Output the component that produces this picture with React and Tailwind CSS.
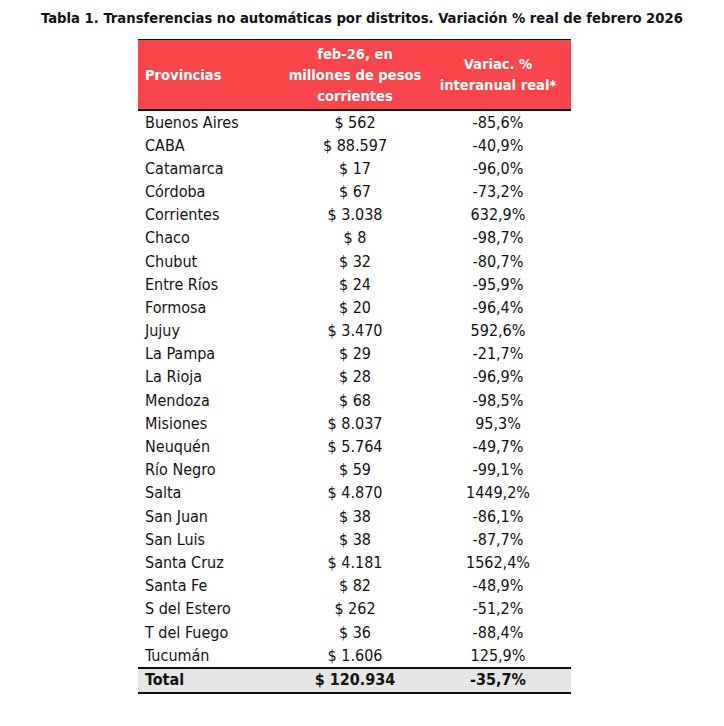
const rows = [
  ['Buenos Aires', '$ 562', '-85,6%'],
  ['CABA', '$ 88.597', '-40,9%'],
  ['Catamarca', '$ 17', '-96,0%'],
  ['Córdoba', '$ 67', '-73,2%'],
  ['Corrientes', '$ 3.038', '632,9%'],
  ['Chaco', '$ 8', '-98,7%'],
  ['Chubut', '$ 32', '-80,7%'],
  ['Entre Ríos', '$ 24', '-95,9%'],
  ['Formosa', '$ 20', '-96,4%'],
  ['Jujuy', '$ 3.470', '592,6%'],
  ['La Pampa', '$ 29', '-21,7%'],
  ['La Rioja', '$ 28', '-96,9%'],
  ['Mendoza', '$ 68', '-98,5%'],
  ['Misiones', '$ 8.037', '95,3%'],
  ['Neuquén', '$ 5.764', '-49,7%'],
  ['Río Negro', '$ 59', '-99,1%'],
  ['Salta', '$ 4.870', '1449,2%'],
  ['San Juan', '$ 38', '-86,1%'],
  ['San Luis', '$ 38', '-87,7%'],
  ['Santa Cruz', '$ 4.181', '1562,4%'],
  ['Santa Fe', '$ 82', '-48,9%'],
  ['S del Estero', '$ 262', '-51,2%'],
  ['T del Fuego', '$ 36', '-88,4%'],
  ['Tucumán', '$ 1.606', '125,9%'],
]

export default function App() {
  return (
    <div className="w-[724px] h-[726px] bg-white text-[#111] font-['DejaVu_Sans_Condensed',sans-serif]">
      <h1 className="pt-[9px] text-center text-[14.7px] leading-[18px] font-bold whitespace-nowrap">
        Tabla 1. Transferencias no automáticas por distritos. Variación % real de febrero 2026
      </h1>
      <table className="ml-[138px] mt-[12px] w-[433px] border-collapse text-[16px]">
        <thead>
          <tr className="bg-[#f8464b] text-white font-bold text-[14.6px] border-t border-b-2 border-[#111] leading-[21px] whitespace-nowrap">
            <th className="w-[147px] h-[70px] p-0 pl-[7px] text-left">Provincias</th>
            <th className="w-[140px] p-0 text-center">feb-26, en<br />millones de pesos<br />corrientes</th>
            <th className="p-0 text-center">Variac. %<br />interanual real*</th>
          </tr>
        </thead>
        <tbody>
          {rows.map(([p, v, pct]) => (
            <tr key={p} className="h-[23.2px] leading-[23px]">
              <td className="p-0 pl-[7px]">{p}</td>
              <td className="p-0 text-center">{v}</td>
              <td className="p-0 text-center">{pct}</td>
            </tr>
          ))}
          <tr className="h-[25px] bg-[#e6e6e6] font-bold border-t-2 border-b-2 border-[#111] leading-[22px]">
            <td className="p-0 pl-[7px]">Total</td>
            <td className="p-0 text-center">$ 120.934</td>
            <td className="p-0 text-center">-35,7%</td>
          </tr>
        </tbody>
      </table>
    </div>
  )
}
